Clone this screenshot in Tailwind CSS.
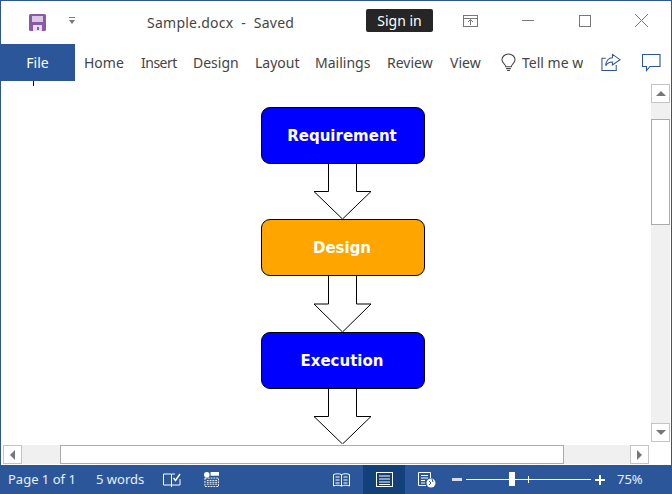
<!DOCTYPE html>
<html lang="en">
<head>
    <meta charset="UTF-8">
    <title>Sample.docx - Saved</title>
    <script src="https://cdn.jsdelivr.net/npm/@tailwindcss/browser@4"></script>
</head>
<body class="bg-white">
    <div class="w-[672px] h-[494px] flex flex-col overflow-hidden bg-white border-t border-x border-[#2b579a] font-['Noto_Sans','Open_Sans',sans-serif]">
        <!-- Title bar -->
        <div class="h-[43px] flex items-center shrink-0 text-[#444]">
            <svg class="ml-[28px] w-[17px] h-[17px]" viewBox="0 0 17 17">
                <path d="M0 1.5 A1.5 1.5 0 0 1 1.5 0 H15.5 A1.5 1.5 0 0 1 17 1.5 V15.5 A1.5 1.5 0 0 1 15.5 17 H1.5 A1.5 1.5 0 0 1 0 15.5 Z" fill="#8a5aa8"/>
                <rect x="3" y="2" width="11" height="6" fill="#d9c8e4"/>
                <rect x="4" y="11" width="9" height="6" fill="#e8dff0"/>
                <rect x="8" y="13" width="2" height="3" fill="#8a5aa8"/>
            </svg>
            <svg class="ml-[23px] mb-[3px] w-[6px] h-[8px]" viewBox="0 0 6 8">
                <rect x="0" y="0" width="6" height="1" fill="#777"/>
                <path d="M0 3 H6 L3 7 Z" fill="#777"/>
            </svg>
            <span class="ml-[72px] w-[145px] mb-[1px] text-[14px] tracking-[0.25px] whitespace-pre">Sample.docx  -  Saved</span>
            <span class="ml-[74px] w-[67px] h-[23px] mb-[4px] bg-[#262626] rounded-[2px] text-white text-[14px] flex items-center justify-center">Sign in</span>
            <svg class="ml-[30px] mb-[4px] w-[15px] h-[12px]" viewBox="0 0 15 12" fill="none" stroke="#777">
                <rect x=".5" y=".5" width="14" height="11"/>
                <path d="M.5 3.5 H14.5 M7.5 10 V5 M5 7 L7.5 4.5 L10 7"/>
            </svg>
            <div class="ml-[44px] mb-[4px] w-[12px] h-px bg-[#777]"></div>
            <div class="ml-[45px] mb-[4px] w-[12px] h-[12px] border border-[#777]"></div>
            <svg class="ml-[44px] mb-[4px] w-[13px] h-[13px]" viewBox="0 0 13 13" stroke="#777">
                <path d="M0 0 L13 13 M13 0 L0 13"/>
            </svg>
        </div>

        <!-- Ribbon tabs -->
        <div class="h-[37px] flex items-center shrink-0 -ml-px text-[14px] text-[#444] whitespace-nowrap">
            <div class="w-[75px] h-full bg-[#2b579a] text-white flex items-center justify-center">File</div>
            <span class="ml-[9px] w-[41px]">Home</span>
            <span class="ml-[16px] w-[36px] tracking-[-0.5px]">Insert</span>
            <span class="ml-[16px] w-[46px]">Design</span>
            <span class="ml-[16px] w-[44px]">Layout</span>
            <span class="ml-[16px] w-[56px]">Mailings</span>
            <span class="ml-[16px] w-[47px]">Review</span>
            <span class="ml-[16px] w-[32px]">View</span>
            <svg class="ml-[19px] w-[15px] h-[20px]" viewBox="0 0 16 20" fill="none" stroke="#444" stroke-width="1.1">
                <path d="M5 14 C5 11 1 10 1 6.5 A7 6 0 0 1 15 6.5 C15 10 11 11 11 14 Z"/>
                <path d="M5.5 16 H10.5 M6.5 18 H9.5"/>
            </svg>
            <span class="ml-[6px] w-[61px] overflow-hidden">Tell me what you want to do</span>
            <svg class="ml-[18px] w-[20px] h-[19px]" viewBox="0 0 21 19" fill="none" stroke="#2b579a" stroke-width="1.1">
                <path d="M5 5 H1 V18 H16 V12"/>
                <path d="M12 1 L20 6.5 L12 12 V9 C9 9 6.5 10 5 13 C5 8 8 4.5 12 4.5 Z"/>
            </svg>
            <svg class="ml-[21px] w-[19px] h-[18px]" viewBox="0 0 19 18" fill="none" stroke="#2b579a" stroke-width="1.1">
                <path d="M.5 .5 H18 V12.5 H8 L4.5 16.5 V12.5 H.5 Z"/>
            </svg>
        </div>

        <!-- Document and scrollbars -->
        <div class="flex-1 flex min-h-0">
            <div class="flex-1 flex flex-col min-w-0">
                <div class="relative flex-1 flex flex-col min-h-0 overflow-hidden pt-[26px] pl-[260px]">
                    <div class="absolute left-[32px] top-0 w-px h-[5px] bg-black"></div>
                    <div class="w-[164px] h-[57px] shrink-0 pt-[2px] pr-[2px] rounded-[9px] border border-black bg-[#0000ff] text-white font-bold text-[15px] font-['DejaVu_Sans',sans-serif] flex items-center justify-center">Requirement</div>
                    <svg class="ml-[52px] w-[59px] h-[55px] shrink-0" viewBox="0 0 59 55" fill="#fff" stroke="#000">
                        <path d="M15.5 0 V27.5 H1 L29.5 55 L58 27.5 H43.5 V0"/>
                    </svg>
                    <div class="w-[164px] h-[57px] shrink-0 pt-[2px] pr-[2px] rounded-[9px] border border-black bg-[#ffa500] text-white font-bold text-[15px] font-['DejaVu_Sans',sans-serif] flex items-center justify-center">Design</div>
                    <svg class="ml-[52px] w-[59px] h-[56px] shrink-0" viewBox="0 0 59 56" fill="#fff" stroke="#000">
                        <path d="M15.5 0 V28 H1 L29.5 56 L58 28 H43.5 V0"/>
                    </svg>
                    <div class="w-[164px] h-[57px] shrink-0 pt-[2px] pr-[2px] rounded-[9px] border border-black bg-[#0000ff] text-white font-bold text-[15px] font-['DejaVu_Sans',sans-serif] flex items-center justify-center">Execution</div>
                    <svg class="ml-[52px] w-[59px] h-[55px] shrink-0" viewBox="0 0 59 55" fill="#fff" stroke="#000">
                        <path d="M15.5 0 V27.5 H1 L29.5 55 L58 27.5 H43.5 V0"/>
                    </svg>
                </div>
                <!-- Horizontal scrollbar -->
                <div class="h-[20px] flex shrink-0 pl-[2px]">
                    <div class="w-[19px] h-[19px] border border-[#c4c4c4] flex items-center justify-center">
                        <div class="w-0 h-0 border-y-[5px] border-y-transparent border-r-[5px] border-r-[#777]"></div>
                    </div>
                    <div class="w-[38px] h-[19px] bg-[#f0f0f0]"></div>
                    <div class="w-[504px] h-[19px] bg-white border border-[#ababab]"></div>
                    <div class="w-[66px] h-[19px] bg-[#f0f0f0]"></div>
                    <div class="w-[19px] h-[19px] border border-[#c4c4c4] flex items-center justify-center">
                        <div class="w-0 h-0 border-y-[5px] border-y-transparent border-l-[5px] border-l-[#777]"></div>
                    </div>
                </div>
            </div>
            <!-- Vertical scrollbar -->
            <div class="w-[20px] shrink-0 pt-[3px] flex flex-col">
                <div class="w-[19px] h-[19px] border border-[#c4c4c4] flex items-center justify-center">
                    <div class="w-0 h-0 border-x-[5px] border-x-transparent border-b-[5px] border-b-[#777]"></div>
                </div>
                <div class="w-[19px] h-[16px] bg-[#f0f0f0]"></div>
                <div class="w-[19px] h-[106px] bg-white border border-[#ababab]"></div>
                <div class="w-[19px] h-[198px] bg-[#f0f0f0]"></div>
                <div class="w-[19px] h-[19px] border border-[#c4c4c4] flex items-center justify-center">
                    <div class="w-0 h-0 border-x-[5px] border-x-transparent border-t-[5px] border-t-[#777]"></div>
                </div>
            </div>
        </div>

        <!-- Status bar -->
        <div class="h-[29px] -mx-px flex items-center shrink-0 bg-[#2b579a] text-white/90 text-[13px] whitespace-nowrap">
            <span class="ml-[8px] w-[66px]">Page 1 of 1</span>
            <span class="ml-[22px] w-[47px]">5 words</span>
            <svg class="ml-[20px] w-[18px] h-[16px]" viewBox="0 0 18 16" fill="none" stroke="#fff">
                <path d="M8.5 2 H.5 V13 H8.5 V15 M8.5 2 V13 M12 2 H9 M17 7 V13 H9"/>
                <path d="M10.5 6 L12.5 8.5 L17 2" stroke-width="1.4"/>
            </svg>
            <svg class="ml-[23px] w-[15px] h-[15px]" viewBox="0 0 16 16" fill="none" stroke="#fff">
                <circle cx="3" cy="3" r="3" fill="#fff" stroke="none"/>
                <rect x="7" y="0" width="9" height="4" fill="#fff" stroke="none"/>
                <path d="M1 6.5 H15.5 V15.5 H1 Z M3 9 H14 M3 11 H14 M3 13 H14" stroke-dasharray="2 1"/>
            </svg>
            <svg class="ml-[114px] w-[17px] h-[14px]" viewBox="0 0 17 14" fill="none" stroke="#fff">
                <path d="M8.5 1.5 C6 .5 3 .5 .5 1.5 V13 C3 12 6 12 8.5 13 C11 12 14 12 16.5 13 V1.5 C14 .5 11 .5 8.5 1.5 V13"/>
                <path d="M2.5 4 H6.5 M2.5 7 H6.5 M2.5 10 H6.5 M10.5 4 H14.5 M10.5 7 H14.5 M10.5 10 H14.5"/>
            </svg>
            <div class="ml-[13px] w-[42px] h-full bg-[#124078] flex items-center justify-center">
                <svg class="w-[17px] h-[15px]" viewBox="0 0 17 15" fill="none" stroke="#fff">
                    <rect x=".5" y=".5" width="16" height="14"/>
                    <path d="M3 4 H14 M3 7 H14 M3 10 H14 M3 12.5 H14"/>
                </svg>
            </div>
            <svg class="ml-[13px] w-[18px] h-[16px]" viewBox="0 0 18 16" fill="none" stroke="#fff">
                <path d="M8 13.5 H.5 V.5 H12.5 V6 M3 3.5 H10 M3 6 H10 M3 8.5 H7 M3 11 H7"/>
                <circle cx="13" cy="11" r="4.5" fill="#fff" stroke="none"/>
                <path d="M11 9 L13 11 L11 13 M14 7 L15 10" stroke="#2b579a"/>
            </svg>
            <div class="ml-[16px] w-[10px] h-[3px] bg-white/80"></div>
            <div class="ml-[4px] relative w-[125px] h-px bg-white">
                <div class="absolute left-[43px] -top-[7px] w-[6px] h-[14px] bg-white"></div>
                <div class="absolute left-[62px] -top-[3px] w-px h-[7px] bg-white"></div>
            </div>
            <svg class="ml-[4px] w-[10px] h-[10px]" viewBox="0 0 10 10" fill="#fff">
                <path d="M4 0 H6 V4 H10 V6 H6 V10 H4 V6 H0 V4 H4 Z"/>
            </svg>
            <span class="ml-[12px]">75%</span>
        </div>
    </div>
</body>
</html>
